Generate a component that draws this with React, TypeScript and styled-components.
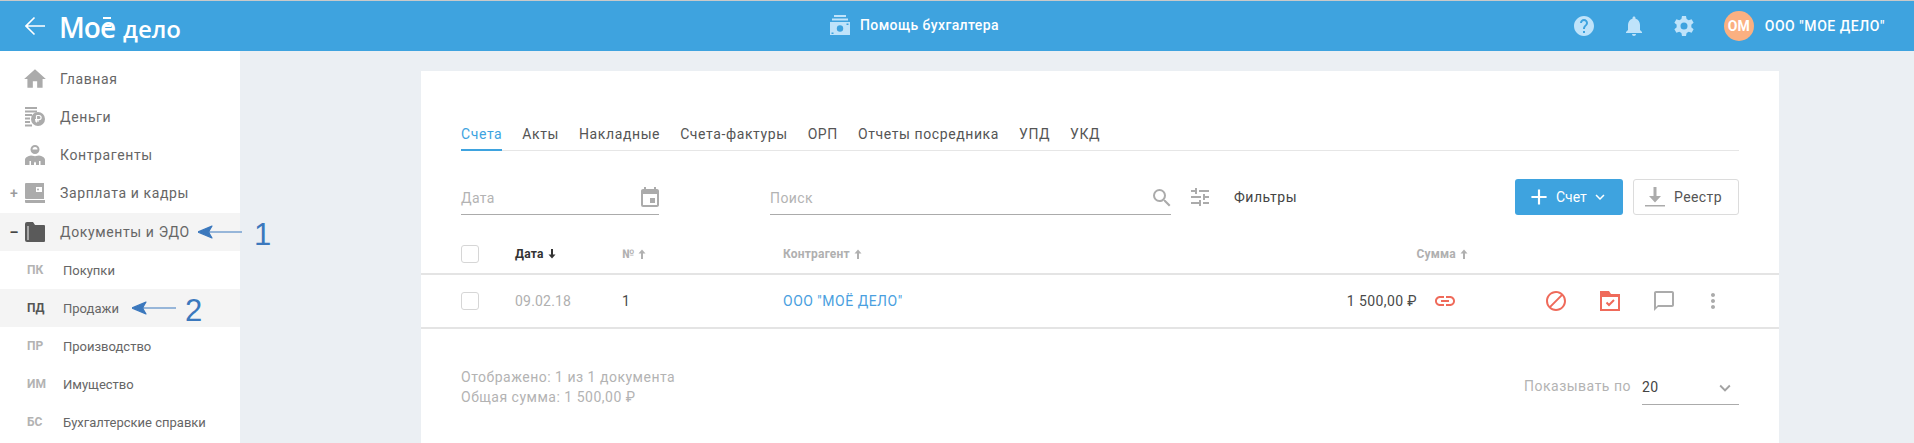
import React from "react";
import styled, { createGlobalStyle } from "styled-components";
import {
  MdHome, MdHelp, MdNotifications, MdEvent, MdSearch, MdTune, MdAdd, MdExpandMore,
  MdLink, MdBlock, MdChatBubbleOutline, MdMoreVert,
} from "react-icons/md";

const Global = createGlobalStyle`
  html, body { margin: 0; padding: 0; background: #ebeff3; }
  body { font-family: Roboto, "Liberation Sans", sans-serif; font-size: 14px; color: #4a4a4a; }
  * { box-sizing: border-box; }
`;

const Page = styled.div`
  width: 1914px; height: 443px; overflow: hidden; display: flex; flex-direction: column;
  border-top: 1px solid #c9c9c9;
`;
const TopBar = styled.header`
  height: 50px; flex: none; background: #3ea3df; display: flex; align-items: center; color: #fff;
`;
const BackArrow = styled.svg`
  width: 20px; height: 20px; margin-left: 25px; flex: none;
`;
const Logo = styled.div`
  margin-left: 14px; width: 771px; flex: none; display: flex; align-items: baseline; color: #fff;
  font-family: "Open Sans", sans-serif; line-height: 1; padding-top: 2px;
`;
const LogoBig = styled.span`
  font-size: 28px; font-weight: 600; letter-spacing: -1px; position: relative;
`;
const LogoBars = styled.span`
  position: relative; display: inline-block;
  &::before {
    content: ""; position: absolute; left: 3px; right: 4px; top: 4px; height: 6px;
    border-top: 2px solid #fff; border-bottom: 2px solid #fff;
  }
`;
const LogoSmall = styled.span`
  font-size: 24px; font-weight: 600; margin-left: 8px; letter-spacing: 0;
`;
const HelpLink = styled.div`
  display: flex; align-items: center; gap: 10px; font-weight: 500; font-size: 14px; color: #fff; margin-top: -2px; letter-spacing: 0.4px;
`;
const TopRight = styled.div`
  margin-left: auto; display: flex; align-items: center; padding-right: 29px;
`;
const TopIcon = styled.span`
  width: 50px; display: flex; justify-content: center; color: #bfe3fa; font-size: 24px; line-height: 0;
`;
const Avatar = styled.span`
  width: 30px; height: 30px; border-radius: 50%; background: #fbb081; color: #fff; font-weight: 700; font-size: 14px;
  display: flex; align-items: center; justify-content: center; margin-left: 15px;
`;
const Company = styled.span`
  margin-left: 11px; font-size: 14px; font-weight: 500; color: #fff; letter-spacing: 0.55px;
`;

const Body = styled.div`flex: 1; display: flex; min-height: 0;`;
const Sidebar = styled.nav`
  width: 240px; flex: none; background: #fff; padding-top: 10px; position: relative; z-index: 2;
`;
const NavRow = styled.div<{ $active?: boolean; $lift?: boolean }>`
  height: 38px; display: flex; align-items: center; position: relative;
  padding-bottom: ${(p) => (p.$lift ? "2px" : "0")};
  background: ${(p) => (p.$active ? "#f4f4f4" : "#fff")};
`;
const Toggle = styled.span`
  width: 25px; flex: none; text-align: center; padding-left: 3px; font-size: 14px; font-weight: 500; color: #9b9b9b;
`;
const ToggleDark = styled(Toggle)`color: #444; font-weight: 700;`;
const NavIcon = styled.span<{ $dark?: boolean }>`
  width: 20px; height: 20px; flex: none; color: ${(p) => (p.$dark ? "#5a5a5a" : "#ababab")}; line-height: 0; font-size: 20px;
`;
const NavText = styled.span`margin-left: 15px; font-size: 14px; color: #666; letter-spacing: 0.62px;`;
const SubAbbr = styled.span<{ $dark?: boolean }>`
  width: 36px; margin-left: 27px; flex: none; font-size: 12px; font-weight: 700;
  color: ${(p) => (p.$dark ? "#555" : "#b3b3b3")};
`;
const SubText = styled.span`font-size: 13px; color: #666;`;
const Note = styled.div<{ $left: number; $gap: number }>`
  position: absolute; left: ${(p) => p.$left}px; top: 0; height: 100%; display: flex; align-items: center; gap: ${(p) => p.$gap}px;
  color: #3b78bd; pointer-events: none;
`;
const NoteNum = styled.span`
  font-family: "Liberation Sans", sans-serif; font-size: 31px; line-height: 1; color: #3b78bd; position: relative; top: 2px;
`;

const Main = styled.main`flex: 1; padding: 20px 135px 0 181px; min-width: 0;`;
const Card = styled.section`background: #fff; height: 100%; padding-top: 49px;`;
const Tabs = styled.div`
  margin: 0 40px; display: flex; gap: 20px; border-bottom: 1px solid #e6e6e6; height: 31px;
`;
const Tab = styled.span<{ $active?: boolean }>`
  height: 31px; padding-top: 6px; font-size: 14px; letter-spacing: 0.6px; color: ${(p) => (p.$active ? "#3ea3df" : "#555")};
  border-bottom: 2px solid ${(p) => (p.$active ? "#3ea3df" : "transparent")};
`;
const FilterBar = styled.div`
  margin: 28px 40px 0; height: 36px; display: flex; align-items: stretch;
`;
const Field = styled.div<{ $w: number; $ml?: number }>`
  width: ${(p) => p.$w}px; margin-left: ${(p) => p.$ml ?? 0}px; border-bottom: 1px solid #ababab; padding-top: 2px;
  display: flex; align-items: center; justify-content: space-between; color: #b3b3b3; font-size: 14px; letter-spacing: 0.4px;
`;
const FieldIcon = styled.span`color: #ababab; line-height: 0; font-size: 24px; margin-right: -3px;`;
const FilterToggle = styled.div`
  margin-left: 17px; display: flex; align-items: center; gap: 22px; font-size: 14px; color: #444; letter-spacing: 0.5px;
  svg { color: #ababab; font-size: 24px; transform: scaleX(-1); }
`;
const Actions = styled.div`margin-left: auto; display: flex; gap: 10px;`;
const Primary = styled.div`
  width: 108px; background: #3ea3df; border-radius: 3px; color: #fff; display: flex; align-items: center; padding-left: 11px; gap: 4px; font-size: 14px;
`;
const Secondary = styled.div`
  width: 106px; border: 1px solid #dcdcdc; border-radius: 3px; display: flex; align-items: center; padding-left: 11px; gap: 9px; color: #555; font-size: 14px; letter-spacing: 0.4px;
`;
const Grid = styled.div<{ $h: number; $top?: number }>`
  height: ${(p) => p.$h}px; padding: ${(p) => p.$top ?? 0}px 40px 0; display: grid; align-items: center;
  grid-template-columns: 54px 107px 161px 1fr 220px 271px;
  border-bottom: 2px solid #e4e4e4;
`;
const Box = styled.span`
  width: 18px; height: 18px; border: 1px solid #d6d6d6; border-radius: 3px; display: block;
`;
const Head = styled.span<{ $dark?: boolean; $right?: boolean }>`
  font-size: 12px; font-weight: 700; color: ${(p) => (p.$dark ? "#333" : "#b0b0b0")}; letter-spacing: 0.2px;
  display: flex; align-items: center; gap: 4px; ${(p) => p.$right && "justify-content: flex-end;"}
`;
const DateCell = styled.span`color: #b0b0b0; font-size: 14px; letter-spacing: 0.2px;`;
const NumCell = styled.span`color: #4a4a4a;`;
const LinkCell = styled.span`color: #4a9fe0; font-size: 14px; letter-spacing: 0.5px;`;
const SumCell = styled.span`
  display: flex; justify-content: flex-end; align-items: center; gap: 16px; padding-right: 11px; color: #4a4a4a; font-size: 14px; letter-spacing: 0.4px;
  svg { color: #ef6a5a; font-size: 24px; }
`;
const RowActions = styled.span`
  display: flex; align-items: center; padding-left: 76px; line-height: 0;
`;
const RowIcon = styled.span<{ $red?: boolean; $w: number }>`
  width: ${(p) => p.$w}px; flex: none; font-size: 24px; line-height: 0; color: ${(p) => (p.$red ? "#ef6a5a" : "#ababab")};
`;
const Footer = styled.div`
  margin: 38px 40px 0; display: flex; justify-content: space-between; color: #b3b3b3; font-size: 14px; line-height: 20px; letter-spacing: 0.5px;
`;
const PageSize = styled.div`display: flex; align-items: flex-start; gap: 11px; margin-top: 9px;`;
const Select = styled.div`
  width: 97px; height: 29px; border-bottom: 1px solid #ababab; color: #444; display: flex; justify-content: space-between;
  align-items: flex-start; padding-top: 1px;
  svg { font-size: 22px; color: #a3a3a3; margin-right: 3px; }
`;

const ArrowNote = () => (
  <svg width="45" height="14" viewBox="0 0 45 14">
    <path d="M44 7H10M0 7 L14 1 L10.5 7 L14 13Z" fill="#3b78bd" stroke="#3b78bd" strokeWidth="1.2" strokeLinejoin="round" />
  </svg>
);
const SortArrow = ({ down }: { down?: boolean }) => (
  <svg width="8" height="10" viewBox="0 0 8 10" style={down ? { transform: "rotate(180deg)" } : undefined}>
    <path d="M4 0.500 L7.500 4.500 H5 V10 H3 V4.500 H0.500Z" fill="currentColor" />
  </svg>
);

const Money = () => (
  <svg viewBox="0 0 20 20" width="20" height="20" fill="currentColor">
    <path d="M0 0h12v2H0zM0 3.500h12v2H0zM0 7h7v2H0zM0 10.500h5v2H0zM0 14h5v2H0zM0 17.500h7v2H0z" />
    <circle cx="13" cy="12" r="7" />
    <path d="M11.500 8.500v7M11.500 8.500h2.500a2 2 0 0 1 0 4.200h-4M10 14h4" fill="none" stroke="#fff" strokeWidth="1.2" />
  </svg>
);
const Person = () => (
  <svg viewBox="0 0 20 20" width="20" height="20" fill="currentColor">
    <path d="M10 0a4.500 4.500 0 1 1 0 9 4.500 4.500 0 0 1 0-9zm0 2a2.500 2.500 0 0 0-2.500 2.500h5A2.500 2.500 0 0 0 10 2z" fillRule="evenodd" />
    <path d="M6 10.500 L9 11v9H6v-4H4.500v4H0v-5c0-2.500 3-4 6-4.500zM14 10.500 L11 11v9h3v-4h1.500v4H20v-5c0-2.500-3-4-6-4.500z" />
    <path d="M9.200 11h1.600l.5 5-1.300 2-1.300-2z" />
  </svg>
);
const Wallet = () => (
  <svg viewBox="0 0 20 20" width="20" height="20" fill="currentColor">
    <path d="M1 0h18v16H1a1 1 0 0 1-1-1V1a1 1 0 0 1 1-1zM0 17h20v3H1a1 1 0 0 1-1-1z" />
    <path d="M11 4h6v5h-6z" fill="#fff" />
    <circle cx="13" cy="6.500" r="1" fill="#ababab" />
  </svg>
);
const Folder = () => (
  <svg viewBox="0 0 20 20" width="20" height="20" fill="currentColor">
    <path d="M2 0h6l2 3h9a1 1 0 0 1 1 1v15a1 1 0 0 1-1 1H2a2 2 0 0 1-2-2V2a2 2 0 0 1 2-2z" />
    <path d="M3 4v14" stroke="#f4f4f4" strokeWidth="1" />
  </svg>
);
const Cash = () => (
  <svg viewBox="0 0 20 20" width="20" height="20" fill="#bfe3fa">
    <path d="M4 0h12v2H4zM2 3.500h16v2H2zM0 7h20v13H0z" />
    <circle cx="10" cy="13.500" r="3.200" fill="#3ea3df" />
    <path d="M1.500 17.500h2v1.500h-2zM16.500 8.500h2V10h-2z" fill="#3ea3df" />
  </svg>
);
const Gear = () => (
  <svg viewBox="0 0 24 24" width="24" height="24" fill="currentColor">
    <path fillRule="evenodd" d="M10 2h4l.6 3 2.100 1.200 2.900-1 2 3.500-2.300 2a7 7 0 0 1 0 2.600l2.300 2-2 3.500-2.900-1-2.100 1.200-.6 3h-4l-.6-3-2.100-1.200-2.900 1-2-3.500 2.300-2a7 7 0 0 1 0-2.600l-2.300-2 2-3.500 2.900 1L9.400 5zM12 8.500a3.500 3.500 0 1 0 0 7 3.500 3.500 0 0 0 0-7z" />
  </svg>
);
const Download = () => (
  <svg viewBox="0 0 20 20" width="20" height="20" fill="#ababab">
    <path d="M8.500 0h3v9H16l-6 6.500L4 9h4.500zM0 18h20v1.500H0z" />
  </svg>
);
const FolderCheck = () => (
  <svg viewBox="0 0 20 20" width="20" height="20">
    <path d="M0 0h9l2 3h9v17H0z" fill="#ef6a5a" />
    <path d="M2 6h16v12H2z" fill="#fff" />
    <path d="M6.500 11.500l2.500 2.500 5-5" fill="none" stroke="#ef6a5a" strokeWidth="2" />
  </svg>
);

const mains = [
  { t: "Главная", i: <MdHome style={{ transform: "scale(1.3)", transformOrigin: "center" }} /> },
  { t: "Деньги", i: <Money /> },
  { t: "Контрагенты", i: <Person /> },
];
const subs: [string, string][] = [
  ["ПК", "Покупки"], ["ПД", "Продажи"], ["ПР", "Производство"], ["ИМ", "Имущество"], ["БС", "Бухгалтерские справки"],
];
const tabs = ["Счета", "Акты", "Накладные", "Счета-фактуры", "ОРП", "Отчеты посредника", "УПД", "УКД"];

export default function App() {
  return (
    <Page>
      <Global />
      <TopBar>
        <BackArrow viewBox="0 0 20 20" fill="none" stroke="#fff" strokeWidth="1.6">
          <path d="M20 10H1M9.500 1.500 1 10l8.500 8.500" />
        </BackArrow>
        <Logo>
          <LogoBig>Мо<LogoBars>е</LogoBars></LogoBig>
          <LogoSmall>дело</LogoSmall>
        </Logo>
        <HelpLink><Cash />Помощь бухгалтера</HelpLink>
        <TopRight>
          <TopIcon><MdHelp /></TopIcon>
          <TopIcon><MdNotifications /></TopIcon>
          <TopIcon><Gear /></TopIcon>
          <Avatar>ОМ</Avatar>
          <Company>ООО "МОЕ ДЕЛО"</Company>
        </TopRight>
      </TopBar>
      <Body>
        <Sidebar>
          {mains.map((m) => (
            <NavRow key={m.t} $lift>
              <Toggle />
              <NavIcon>{m.i}</NavIcon>
              <NavText>{m.t}</NavText>
            </NavRow>
          ))}
          <NavRow $lift>
            <Toggle>+</Toggle>
            <NavIcon><Wallet /></NavIcon>
            <NavText>Зарплата и кадры</NavText>
          </NavRow>
          <NavRow $active>
            <ToggleDark>–</ToggleDark>
            <NavIcon $dark><Folder /></NavIcon>
            <NavText>Документы и ЭДО</NavText>
            <Note $left={198} $gap={11}><ArrowNote /><NoteNum>1</NoteNum></Note>
          </NavRow>
          {subs.map(([a, t]) => (
            <NavRow key={a} $active={a === "ПД"}>
              <SubAbbr $dark={a === "ПД"}>{a}</SubAbbr>
              <SubText>{t}</SubText>
              {a === "ПД" && <Note $left={132} $gap={8}><ArrowNote /><NoteNum>2</NoteNum></Note>}
            </NavRow>
          ))}
        </Sidebar>
        <Main>
          <Card>
            <Tabs>
              {tabs.map((t, i) => <Tab key={t} $active={i === 0}>{t}</Tab>)}
            </Tabs>
            <FilterBar>
              <Field $w={198}>Дата<FieldIcon><MdEvent /></FieldIcon></Field>
              <Field $w={401} $ml={111}>Поиск<FieldIcon><MdSearch /></FieldIcon></Field>
              <FilterToggle><MdTune />Фильтры</FilterToggle>
              <Actions>
                <Primary><MdAdd size={26} />Счет<MdExpandMore size={18} /></Primary>
                <Secondary><Download />Реестр</Secondary>
              </Actions>
            </FilterBar>
            <Grid $h={60} $top={20}>
              <Box />
              <Head $dark>Дата<SortArrow down /></Head>
              <Head>№<SortArrow /></Head>
              <Head>Контрагент<SortArrow /></Head>
              <Head $right>Сумма<SortArrow /></Head>
              <span />
            </Grid>
            <Grid $h={54}>
              <Box />
              <DateCell>09.02.18</DateCell>
              <NumCell>1</NumCell>
              <LinkCell>ООО "МОЁ ДЕЛО"</LinkCell>
              <SumCell>1 500,00 ₽<MdLink /></SumCell>
              <RowActions>
                <RowIcon $red $w={56}><MdBlock /></RowIcon>
                <RowIcon $w={52}><FolderCheck /></RowIcon>
                <RowIcon $w={49}><MdChatBubbleOutline /></RowIcon>
                <RowIcon $w={24}><MdMoreVert /></RowIcon>
              </RowActions>
            </Grid>
            <Footer>
              <div>Отображено: 1 из 1 документа<br />Общая сумма: 1 500,00 ₽</div>
              <PageSize>
                Показывать по
                <Select>20<MdExpandMore /></Select>
              </PageSize>
            </Footer>
          </Card>
        </Main>
      </Body>
    </Page>
  );
}
